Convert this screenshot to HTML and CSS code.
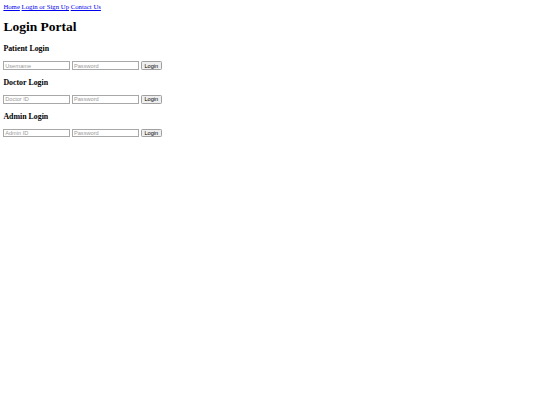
FILE: index.html
```html
<!DOCTYPE html>
<html lang="en">
<head>
<meta charset="utf-8">
<title>Login Portal</title>
<link rel="stylesheet" href="styles.css">
</head>
<body class="page">
<nav class="nav">
<a href="#" class="nav-link">Home</a>
<a href="#" class="nav-link">Login or Sign Up</a>
<a href="#" class="nav-link">Contact Us</a>
</nav>
<h1 class="title">Login Portal</h1>

<h3 class="section-title">Patient Login</h3>
<form class="login-form">
<input class="field" type="text" placeholder="Username">
<input class="field" type="password" placeholder="Password">
<button class="btn" type="button">Login</button>
</form>

<h3 class="section-title">Doctor Login</h3>
<form class="login-form">
<input class="field" type="text" placeholder="Doctor ID">
<input class="field" type="password" placeholder="Password">
<button class="btn" type="button">Login</button>
</form>

<h3 class="section-title">Admin Login</h3>
<form class="login-form">
<input class="field" type="text" placeholder="Admin ID">
<input class="field" type="password" placeholder="Password">
<button class="btn" type="button">Login</button>
</form>
</body>
</html>
```
FILE: styles.css
```css
html {
  background: #ffffff;
}

.page {
  zoom: 0.421875;
  margin: 8px;
  font-family: "Liberation Serif", "Times New Roman", serif;
  font-size: 16px;
  color: #000000;
}

.nav-link {
  color: #0000ee;
  text-decoration: underline;
}

.title {
  font-size: 32px;
  font-weight: bold;
  margin: 21.44px 0;
}

.section-title {
  font-size: 18.72px;
  font-weight: bold;
  margin: 18.72px 0;
}

.login-form {
  margin: 0;
}

.field {
  box-sizing: border-box;
  width: 159px;
  height: 21px;
  padding: 1px 2px;
  border: 2px solid #a8a8a8;
  border-radius: 0;
  background: #ffffff;
  font-family: "Liberation Sans", Arial, sans-serif;
  font-size: 13.333px;
  color: #000000;
}

.field::placeholder {
  color: #9a9a9a;
}

.btn {
  box-sizing: border-box;
  height: 21px;
  padding: 1px 6px;
  border: 2px solid #a0a0a0;
  border-radius: 3px;
  background: #efefef;
  font-family: "Liberation Sans", Arial, sans-serif;
  font-size: 13.333px;
  color: #000000;
}
```
